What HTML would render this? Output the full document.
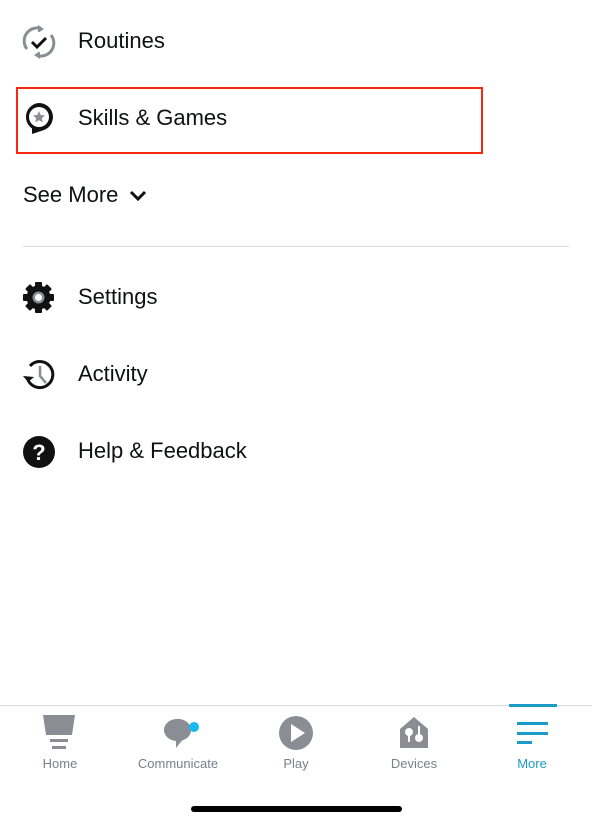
<!DOCTYPE html><html><head><meta charset="utf-8"><style>
*{margin:0;padding:0;box-sizing:border-box}
body{width:592px;height:825px;background:#fff;position:relative;overflow:hidden;font-family:"Liberation Sans",sans-serif;color:#0f1111}
.t{position:absolute;left:78px;font-size:22px;line-height:26px}
.i{position:absolute;left:22px}
.nav{position:absolute;top:705px;left:0;width:592px;height:120px;border-top:1px solid #ddd}
.lb{position:absolute;top:756px;font-size:13px;color:#7b8088;width:120px;text-align:center}
</style></head><body>
<svg class="i" style="top:25px" width="34" height="34" viewBox="0 0 34 34"><path d="M5 24A13 13 0 0 1 19 3.5" fill="none" stroke="#8a8e94" stroke-width="3"/><path d="M16 0l6 4-6 4z" fill="#8a8e94"/><path d="M29 10A13 13 0 0 1 15 30.5" fill="none" stroke="#8a8e94" stroke-width="3"/><path d="M18 34l-6-4 6-4z" fill="#8a8e94"/><circle cx="17" cy="17" r="10" fill="#fff"/><path d="M10 17l5 5 9-9" fill="none" stroke="#111" stroke-width="3"/></svg>
<div class="t" style="top:28px">Routines</div>
<div style="position:absolute;left:16px;top:87px;width:467px;height:67px;border:2px solid #f4290f"></div>
<svg class="i" style="top:101px" width="34" height="34" viewBox="0 0 34 34"><path d="M17 2a14 14 0 0 1 4 27.4L10 33v-5.5A14 14 0 0 1 17 2z" fill="#111"/><circle cx="17" cy="16" r="10" fill="#fff"/><path d="M17 10l1.8 4 4.2.4-3.2 2.8 1 4.2-3.8-2.2-3.8 2.2 1-4.2-3.2-2.8 4.2-.4z" fill="#8a8e94"/></svg>
<div class="t" style="top:105px">Skills &amp; Games</div>
<div class="t" style="top:182px;left:23px">See More</div>
<svg style="position:absolute;left:128px;top:189px" width="20" height="14" viewBox="0 0 20 14"><path d="M3 3l7 7 7-7" fill="none" stroke="#111" stroke-width="3"/></svg>
<div style="position:absolute;left:23px;top:246px;width:546px;height:1px;background:#ddd"></div>
<svg class="i" style="top:281px" width="33" height="33" viewBox="0 0 33 33"><g transform="translate(16.5 16.5)" fill="#111"><circle r="12"/><g id="g"><rect x="-3.5" y="-15.5" width="7" height="6" rx="1"/></g><use href="#g" transform="rotate(45)"/><use href="#g" transform="rotate(90)"/><use href="#g" transform="rotate(135)"/><use href="#g" transform="rotate(180)"/><use href="#g" transform="rotate(225)"/><use href="#g" transform="rotate(270)"/><use href="#g" transform="rotate(315)"/><circle r="6" fill="#8a8e94"/><circle r="3.5" fill="#fff"/></g></svg>
<div class="t" style="top:284px">Settings</div>
<svg class="i" style="top:358px" width="34" height="34" viewBox="0 0 34 34"><path d="M6 22A13 13 0 1 0 8 8" fill="none" stroke="#111" stroke-width="3"/><path d="M1 18l5 6 6-5z" fill="#111"/><path d="M18 8v10l6 7" fill="none" stroke="#8a8e94" stroke-width="2.5"/></svg>
<div class="t" style="top:361px">Activity</div>
<svg class="i" style="top:435px" width="34" height="34" viewBox="0 0 34 34"><circle cx="17" cy="17" r="16" fill="#111"/><text x="17" y="25" text-anchor="middle" font-size="22" font-weight="bold" fill="#fff" font-family="Liberation Sans">?</text></svg>
<div class="t" style="top:438px">Help &amp; Feedback</div>
<div class="nav"></div>
<svg style="position:absolute;left:43px;top:715px" width="32" height="36" viewBox="0 0 32 36"><path d="M0 0h32l-3 20H3z" fill="#8a8e94"/><rect x="7" y="24" width="18" height="3" fill="#8a8e94"/><rect x="9" y="31" width="14" height="3" fill="#8a8e94"/></svg>
<div class="lb" style="left:0">Home</div>
<svg style="position:absolute;left:162px;top:715px" width="40" height="36" viewBox="0 0 40 36"><path d="M16 4a13 11 0 0 1 4 21.5L14 33v-7A13 11 0 0 1 16 4z" fill="#8a8e94"/><circle cx="32" cy="12" r="5" fill="#1ab8f0"/></svg>
<div class="lb" style="left:118px">Communicate</div>
<svg style="position:absolute;left:278px;top:715px" width="36" height="36" viewBox="0 0 36 36"><circle cx="18" cy="18" r="17" fill="#8a8e94"/><path d="M13 9l14 9-14 9z" fill="#fff"/></svg>
<div class="lb" style="left:236px">Play</div>
<svg style="position:absolute;left:398px;top:716px" width="32" height="32" viewBox="0 0 32 32"><path d="M16 1L30 13v19H2V13z" fill="#8a8e94"/><circle cx="11" cy="16" r="4" fill="#fff"/><rect x="10" y="16" width="2" height="10" fill="#fff"/><rect x="20" y="10" width="2" height="10" fill="#fff"/><circle cx="21" cy="22" r="4" fill="#fff"/></svg>
<div class="lb" style="left:354px">Devices</div>
<div style="position:absolute;left:509px;top:704px;width:48px;height:3px;background:#1a9cc7"></div>
<div style="position:absolute;left:517px;top:722px;width:31px;height:3px;background:#1a9cc7"></div>
<div style="position:absolute;left:517px;top:732px;width:31px;height:3px;background:#1a9cc7"></div>
<div style="position:absolute;left:517px;top:741px;width:15px;height:3px;background:#1a9cc7"></div>
<div class="lb" style="left:472px;color:#1a9cc7">More</div>
<div style="position:absolute;left:191px;top:806px;width:211px;height:6px;border-radius:3px;background:#000"></div>
</body></html>
